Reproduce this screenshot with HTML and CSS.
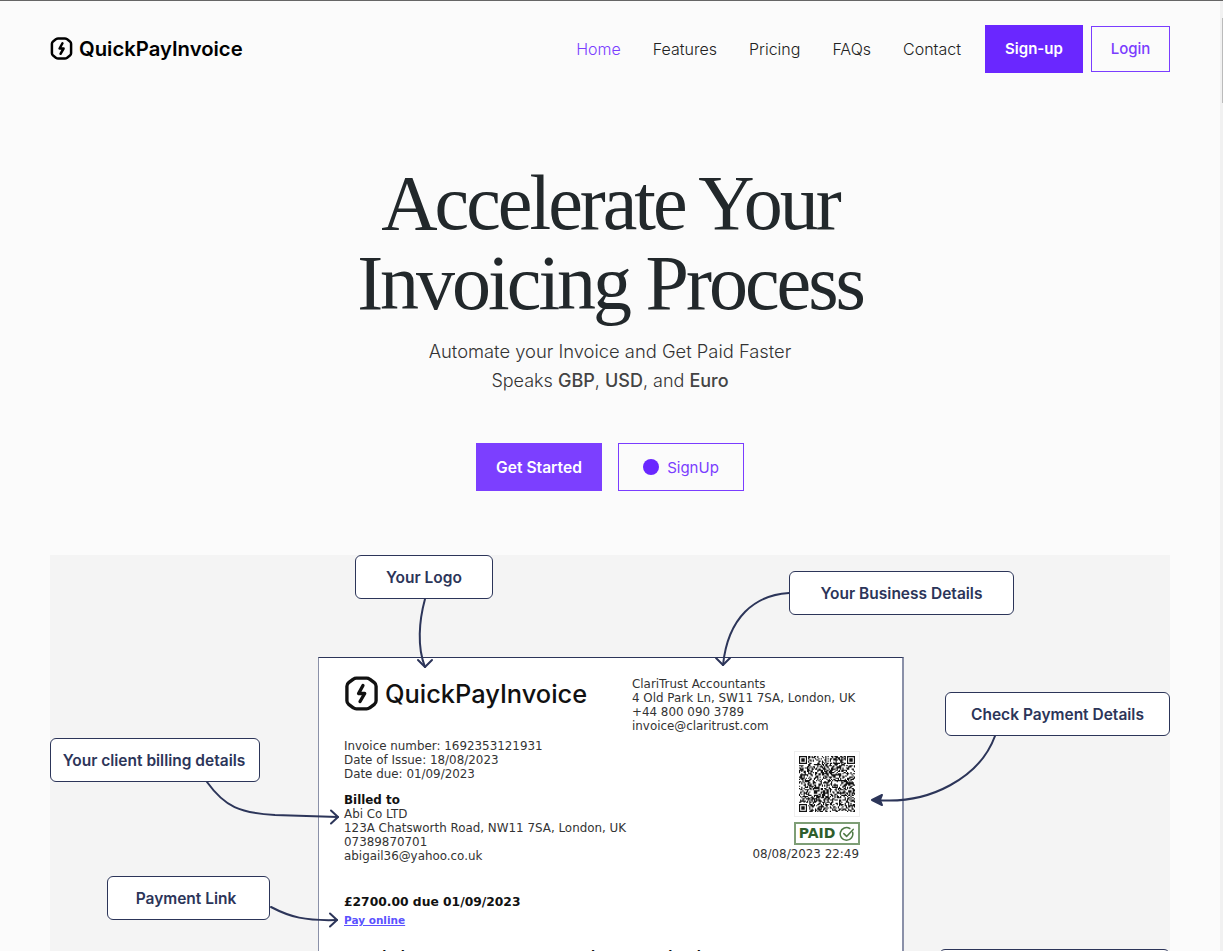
FILE: index.html
```html
<!DOCTYPE html>
<html lang="en">
<head>
    <meta charset="UTF-8">
    <meta name="viewport" content="width=device-width, initial-scale=1.0">
    <title>QuickPayInvoice</title>
    <link rel="stylesheet" href="styles.css">
</head>
<body>
    <header class="navbar">
        <a class="brand" href="#">
            <svg class="brand-icon" viewBox="0 0 24 24" fill="none" stroke="#000" stroke-width="2.6" stroke-linejoin="round" stroke-linecap="round">
                <path d="M8.5 1.5h7c.8 0 1.500.2 2.100.7l3.200 2.400c.8.6 1.200 1.400 1.200 2.400v10c0 1-.4 1.800-1.200 2.400l-3.200 2.400c-.6.5-1.300.7-2.100.7h-7c-.8 0-1.500-.2-2.100-.7l-3.200-2.400C2.400 18.800 2 18 2 17V7c0-1 .4-1.800 1.200-2.400l3.200-2.400c.6-.5 1.300-.7 2.100-.7z"/>
                <path d="M13 6.500l-3 5.500h4.200L11 17.500"/>
            </svg>
            QuickPayInvoice
        </a>
        <nav class="nav-links">
            <a class="active" href="#">Home</a>
            <a href="#">Features</a>
            <a href="#">Pricing</a>
            <a href="#">FAQs</a>
            <a href="#">Contact</a>
        </nav>
        <a class="btn btn-solid nav-signup" href="#">Sign-up</a>
        <a class="btn btn-outline nav-login" href="#">Login</a>
    </header>

    <section class="hero">
        <h1>Accelerate Your<br>Invoicing Process</h1>
        <p>Automate your Invoice and Get Paid Faster<br><span class="speaks">Speaks <b>GBP</b>, <b>USD</b>, and <b>Euro</b></span></p>
        <div class="hero-actions">
            <a class="btn btn-solid btn-light" href="#">Get Started</a>
            <a class="btn btn-outline btn-dot" href="#"><span class="dot"></span>SignUp</a>
        </div>
    </section>

    <section class="diagram">
        <div class="invoice">
            <div class="invoice-logo">
                <svg class="invoice-logo-icon" viewBox="0 0 24 24" fill="none" stroke="#111" stroke-width="2.3" stroke-linejoin="round" stroke-linecap="round">
                    <path d="M8.5 1.5h7c.8 0 1.500.2 2.100.7l3.200 2.400c.8.6 1.200 1.400 1.200 2.400v10c0 1-.4 1.800-1.200 2.400l-3.200 2.400c-.6.5-1.300.7-2.100.7h-7c-.8 0-1.500-.2-2.100-.7l-3.200-2.400C2.400 18.800 2 18 2 17V7c0-1 .4-1.800 1.200-2.400l3.200-2.400c.6-.5 1.300-.7 2.100-.7z"/>
                    <path d="M13 6.500l-3 5.500h4.200L11 17.500"/>
                </svg>
                QuickPayInvoice
            </div>
            <div class="invoice-from">
                ClariTrust Accountants<br>
                4 Old Park Ln, SW11 7SA, London, UK<br>
                +44 800 090 3789<br>
                invoice@claritrust.com
            </div>
            <div class="invoice-meta">
                Invoice number: 1692353121931<br>
                Date of Issue: 18/08/2023<br>
                Date due: 01/09/2023
            </div>
            <div class="invoice-billed">
                <b>Billed to</b><br>
                Abi Co LTD<br>
                123A Chatsworth Road, NW11 7SA, London, UK<br>
                07389870701<br>
                abigail36@yahoo.co.uk
            </div>
            <div class="invoice-due">£2700.00 due 01/09/2023</div>
            <a class="invoice-pay" href="#">Pay online</a>
            <div class="invoice-status">
                <svg class="qr" id="qr" viewBox="0 0 49 49"></svg>
                <div class="paid">PAID
                    <svg class="paid-check" viewBox="0 0 16 16" fill="none" stroke="#4f7a45" stroke-width="1.5" stroke-linecap="round" stroke-linejoin="round">
                        <path d="M13.6 6.2A6.300 6.300 0 1 1 10.800 2.500"/>
                        <path d="M4.800 7.600l2.800 2.800 6.600-7"/>
                    </svg>
                </div>
                <div class="paid-date">08/08/2023 22:49</div>
            </div>
            <div class="invoice-table"><b>Description</b><b>Quantity</b><b>Unit price</b><b>Amount</b></div>
        </div>

        <svg class="arrows" viewBox="0 0 1120 396" fill="none" stroke="#2c3559" stroke-width="2" stroke-linecap="round" stroke-linejoin="round">
            <path d="M375 44C369 66 367 92 375 112"/>
            <path d="M368 105l7 7 7-7"/>
            <path d="M739 38C705 40 678 62 673 110"/>
            <path d="M666 103l7 7 7-7"/>
            <path d="M945 181C930 222 880 250 826 245"/>
            <path d="M832 240l-10 5 10 5-2-5z" fill="#2c3559"/>
            <path d="M157 227C175 252 190 258 225 260L288 262"/>
            <path d="M281 255.500l7 6.500-7 6.500"/>
            <path d="M221 352C240 362 255 366 287 365"/>
            <path d="M280 358.500l7 6.500-7 6.500"/>
        </svg>

        <div class="callout callout-logo">Your Logo</div>
        <div class="callout callout-business">Your Business Details</div>
        <div class="callout callout-payment">Check Payment Details</div>
        <div class="callout callout-client">Your client billing details</div>
        <div class="callout callout-link">Payment Link</div>
        <div class="callout callout-next"></div>
    </section>

    <script src="qr.js"></script>
</body>
</html>
```

FILE: styles.css
```css
html, body {
    height: 951px;
    overflow: hidden;
}
body {
    margin: 0;
    padding: 0 53px 0 50px;
    border-top: 1px solid #666;
    background-color: #fbfbfb;
    font-family: Inter, sans-serif;
    color: #222;
    box-sizing: border-box;
}
/* thin scrollbar on the right edge */
body::before {
    content: "";
    position: fixed;
    right: 0;
    top: 1px;
    width: 3px;
    height: 950px;
    background-color: #f1f1f1;
}
body::after {
    content: "";
    position: fixed;
    right: 0;
    top: 18px;
    width: 1px;
    height: 85px;
    background-color: #bbb;
}
a {
    text-decoration: none;
}

/* nav */
.navbar {
    display: flex;
    align-items: center;
    height: 95px;
}
.brand {
    display: flex;
    align-items: center;
    gap: 6px;
    margin-right: auto;
    color: #000;
    font-size: 20.3px;
    font-weight: 600;
}
.brand-icon {
    width: 23px;
    height: 23px;
}
.nav-links {
    display: flex;
    gap: 32px;
    margin-right: 24px;
    font-size: 16px;
    font-weight: 300;
}
.nav-links a {
    color: #222;
}
.nav-links a.active {
    color: #7a3dff;
}
.btn {
    display: flex;
    align-items: center;
    justify-content: center;
    box-sizing: border-box;
    font-size: 15px;
}
.btn-solid {
    background-color: #6a27ff;
    color: #fff;
    font-weight: 600;
}
.btn-light {
    background-color: #7c3fff;
    font-size: 15.6px;
}
.btn-outline {
    border: 1px solid #7a3dff;
    color: #7a3dff;
    font-weight: 500;
}
.nav-signup {
    width: 98px;
    height: 48px;
    margin-right: 8px;
}
.nav-login {
    width: 79px;
    height: 46px;
}

/* hero */
.hero {
    text-align: center;
}
.hero h1 {
    margin: 67px 0 0;
    font-family: "Liberation Serif", serif;
    font-size: 78px;
    font-weight: 400;
    line-height: 80px;
    letter-spacing: -3px;
    color: #22282b;
}
.hero p {
    margin: 14px 0 0;
    font-size: 18.35px;
    font-weight: 300;
    line-height: 29px;
    color: #333;
}
.hero .speaks {
    font-size: 18px;
}
.hero p b {
    font-weight: 500;
    color: #444;
}
.hero-actions {
    display: flex;
    justify-content: center;
    gap: 16px;
    margin-top: 48px;
}
.hero-actions .btn {
    width: 126px;
    height: 48px;
}
.btn-dot {
    gap: 8px;
    font-weight: 400;
}
.dot {
    width: 16px;
    height: 16px;
    border-radius: 50%;
    background-color: #6a27ff;
}

/* invoice diagram */
.diagram {
    position: relative;
    height: 396px;
    margin-top: 64px;
    overflow: hidden;
    background-color: #f4f4f4;
}
.arrows {
    position: absolute;
    left: 0;
    top: 0;
    width: 1120px;
    height: 396px;
}
.callout {
    position: absolute;
    display: flex;
    align-items: center;
    justify-content: center;
    box-sizing: border-box;
    height: 44px;
    border: 1px solid #2c3559;
    border-radius: 6px;
    background-color: #fff;
    color: #2c3559;
    font-size: 15.5px;
    font-weight: 600;
}
.callout-logo { left: 305px; top: 0; width: 138px; }
.callout-business { left: 739px; top: 16px; width: 225px; }
.callout-payment { left: 895px; top: 137px; width: 225px; }
.callout-client { left: 0; top: 183px; width: 210px; padding-right: 2px; }
.callout-link { left: 57px; top: 321px; width: 163px; padding-right: 5px; }
.callout-next { left: 889px; top: 394px; width: 231px; }

.invoice {
    position: absolute;
    left: 268px;
    top: 102px;
    box-sizing: border-box;
    width: 586px;
    height: 400px;
    border: 1px solid #2c3559;
    border-right: 2px solid #8a90a8;
    border-left-color: #8a90a8;
    background-color: #fff;
    color: #333;
    font-family: "DejaVu Sans", sans-serif;
    font-size: 11.9px;
    line-height: 13.9px;
}
.invoice > * {
    position: absolute;
}
.invoice-logo {
    left: 25px;
    top: 18px;
    display: flex;
    align-items: center;
    gap: 6px;
    color: #111;
    font-family: Inter, sans-serif;
    font-size: 25.4px;
    font-weight: 500;
    line-height: 34px;
}
.invoice-logo-icon {
    width: 35px;
    height: 35px;
}
.invoice-from { left: 313px; top: 20px; white-space: nowrap; }
.invoice-meta { left: 25px; top: 82px; }
.invoice-billed { left: 25px; top: 136px; white-space: nowrap; }
.invoice-billed b,
.invoice-due {
    color: #111;
    font-weight: 700;
}
.invoice-due { left: 25px; top: 238px; font-size: 12.3px; }
.invoice-pay {
    left: 25px;
    top: 256px;
    color: #5b52ff;
    font-size: 10.5px;
    font-weight: 700;
    text-decoration: underline;
}
.invoice-status {
    right: 42px;
    top: 93px;
    display: flex;
    flex-direction: column;
    align-items: flex-end;
}
.qr {
    box-sizing: border-box;
    width: 66px;
    height: 66px;
    padding: 4px;
    border: 1px solid #eee;
    margin-bottom: 5px;
}
.paid {
    display: flex;
    align-items: center;
    justify-content: center;
    gap: 4px;
    box-sizing: border-box;
    width: 66px;
    height: 23px;
    border: 2px solid #7e9e76;
    color: #2f5e2c;
    font-size: 14px;
    font-weight: 700;
}
.paid-check {
    width: 16px;
    height: 16px;
}
.paid-date {
    margin: 3px 1px 0 0;
    white-space: nowrap;
}
.invoice-table {
    left: 25px;
    top: 292px;
    display: grid;
    grid-template-columns: 206px 100px 113px 100px;
    color: #111;
    font-size: 12px;
}
```

FILE: qr.js
```js
// fills the qr box with a fixed pseudo random pattern
var qr = document.getElementById('qr');
var size = 49;
var seed = 20230808;
var path = '';

function rand() {
    seed = (seed * 1664525 + 1013904223) % 4294967296;
    return seed / 4294967296;
}

function inFinder(x, y) {
    return (x < 8 && y < 8) || (x >= size - 8 && y < 8) || (x < 8 && y >= size - 8);
}

function finderCell(x, y) {
    var fx = x < 8 ? x : x - (size - 7);
    var fy = y < 8 ? y : y - (size - 7);
    if (fx < 0 || fy < 0 || fx > 6 || fy > 6) return false;
    return fx === 0 || fx === 6 || fy === 0 || fy === 6 || (fx > 1 && fx < 5 && fy > 1 && fy < 5);
}

for (var y = 0; y < size; y++) {
    for (var x = 0; x < size; x++) {
        var on = inFinder(x, y) ? finderCell(x, y) : rand() > 0.5;
        if (on) path += 'M' + x + ' ' + y + 'h1v1h-1z';
    }
}

var el = document.createElementNS('http://www.w3.org/2000/svg', 'path');
el.setAttribute('d', path);
el.setAttribute('fill', '#111');
qr.appendChild(el);
```
